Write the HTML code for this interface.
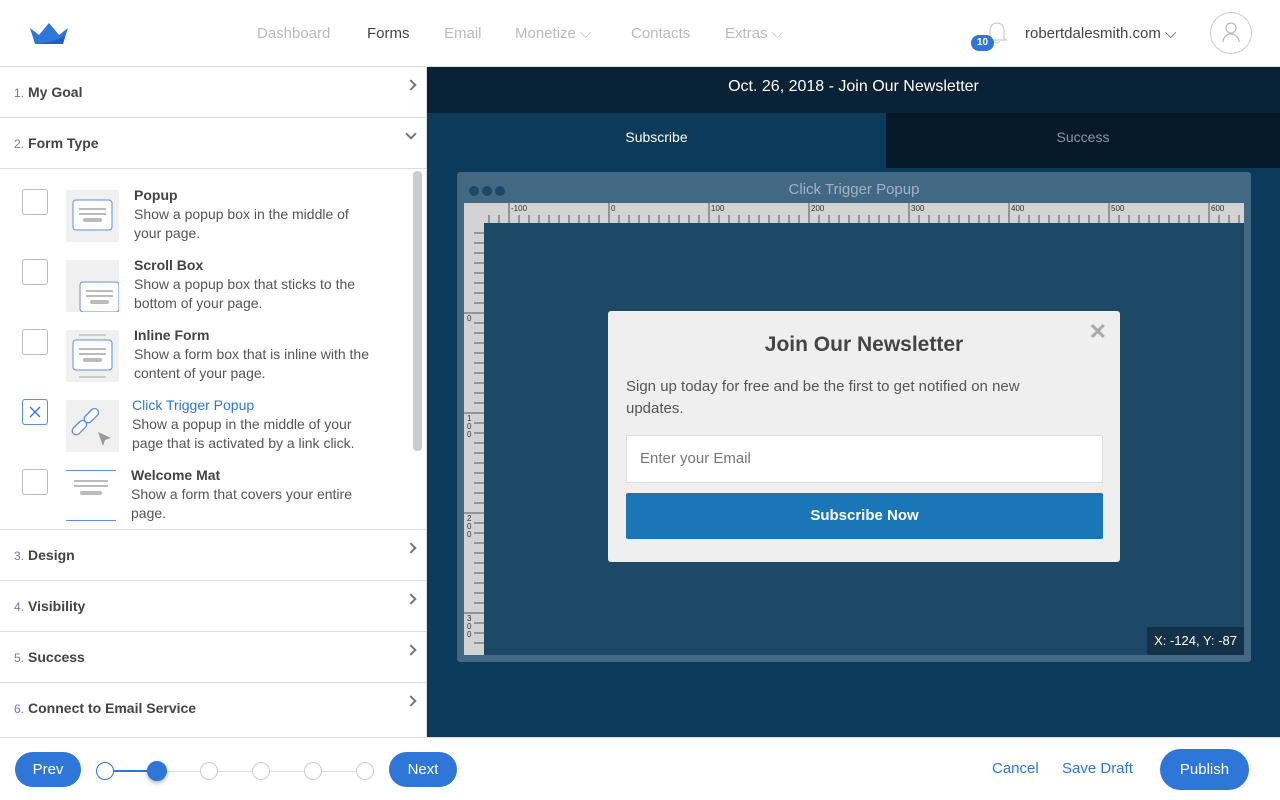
<!DOCTYPE html>
<html><head><meta charset="utf-8"><style>
*{box-sizing:border-box;margin:0;padding:0}
body{width:1280px;height:800px;overflow:hidden;font-family:"Liberation Sans",sans-serif;background:#fff;position:relative;color:#444}
.hdr{position:absolute;left:0;top:0;width:1280px;height:67px;border-bottom:1px solid #ddd;background:#fff}
.nav{position:absolute;top:25px;font-size:15px;color:#bbb}
.side{position:absolute;left:0;top:67px;width:427px;height:670px;background:#fff;border-right:1px solid #ddd}
.sec{position:absolute;left:0;width:427px;height:51px;border-bottom:1px solid #ddd;font-size:14px;font-weight:bold;color:#444}
.sec span.n{color:#7b6fc4;font-size:12px;font-weight:normal;margin-right:4px}
.sec .t{position:absolute;left:14px;top:17px}
.chev{position:absolute;right:12px;top:14px;width:8px;height:8px;border-right:2.5px solid #777;border-top:2.5px solid #777;transform:rotate(45deg)}
.item{position:absolute;left:0;width:410px;height:70px}
.cb{position:absolute;left:22px;top:20px;width:26px;height:26px;border:1px solid #bbb;border-radius:3px}
.ic{position:absolute;left:66px;top:21px;width:53px;height:52px;background:#f0f0f0;border-radius:2px}
.it{position:absolute;left:134px;top:18px;font-size:14px;font-weight:bold;color:#444}
.id{position:absolute;left:134px;top:36px;font-size:14px;color:#555;line-height:19px;width:238px}
.right{position:absolute;left:427px;top:67px;width:853px;height:670px;background:#0c3a5a}
.foot{position:absolute;left:0;top:737px;width:1280px;height:63px;background:#fff;border-top:1px solid #ddd}
.btn{position:absolute;background:#2f76d9;color:#fff;font-size:15px;text-align:center;border-radius:18px}
.dot{position:absolute;top:24px;width:18px;height:18px;border-radius:50%;border:1px solid #ccc;background:#fff}
</style></head><body>
<div class="hdr">
<svg style="position:absolute;left:30px;top:23px" width="38" height="22" viewBox="0 0 38 22"><path d="M0 5 L9 12 L19 0 L29 12 L38 5 L33 21 L5 21 Z" fill="#2f76d9"/><path d="M5 21 Q22 20 35 13 L33 21Z" fill="#1f5fbf"/></svg>
<div class="nav" style="left:257px">Dashboard</div>
<div class="nav" style="left:367px;color:#444">Forms</div>
<div class="nav" style="left:444px">Email</div>
<div class="nav" style="left:515px">Monetize ⌵</div>
<div class="nav" style="left:631px">Contacts</div>
<div class="nav" style="left:725px">Extras ⌵</div>
<svg style="position:absolute;left:986px;top:19px" width="22" height="26" viewBox="0 0 22 26"><path d="M4 19 V11 A7 7 0 0 1 18 11 V19 L20 21 H2 Z M9 22 A2 2 0 0 0 13 22" fill="none" stroke="#ccc" stroke-width="1.2"/></svg>
<div style="position:absolute;left:971px;top:35px;width:23px;height:16px;border-radius:8px;background:#2f76d9;color:#fff;font-size:10px;font-weight:bold;text-align:center;line-height:16px">10</div>
<div class="nav" style="left:1025px;color:#444">robertdalesmith.com ⌵</div>
<div style="position:absolute;left:1210px;top:12px;width:42px;height:42px;border:1px solid #ccc;border-radius:50%"><svg width="40" height="40" viewBox="0 0 40 40"><circle cx="20" cy="15" r="5" fill="none" stroke="#bbb" stroke-width="1.3"/><path d="M12 29 A8 8 0 0 1 28 29" fill="none" stroke="#bbb" stroke-width="1.3"/></svg></div>
</div>

<div class="side">
<div class="sec" style="top:0"><div class="t"><span class="n">1.</span>My Goal</div><div class="chev"></div></div>
<div class="sec" style="top:51px"><div class="t"><span class="n">2.</span>Form Type</div><div class="chev" style="transform:rotate(135deg);top:12px"></div></div>
<div style="position:absolute;left:0;top:102px;width:427px;height:361px;border-bottom:1px solid #ddd">
<div style="position:absolute;left:413px;top:2px;width:9px;height:280px;background:#ccc;border-radius:4px"></div>
<div class="item" style="top:0"><div class="cb"></div><div class="ic"><svg width="53" height="52"><rect x="7" y="10" width="39" height="30" rx="3" fill="#fff" stroke="#5b8ee6"/><rect x="13" y="18" width="27" height="2" fill="#bbb"/><rect x="13" y="23" width="27" height="2" fill="#bbb"/><rect x="17" y="28" width="19" height="4" rx="2" fill="#bbb"/></svg></div><div class="it">Popup</div><div class="id">Show a popup box in the middle of your page.</div></div>
<div class="item" style="top:70px"><div class="cb"></div><div class="ic"><svg width="53" height="52"><rect x="14" y="22" width="39" height="30" rx="3" fill="#fff" stroke="#5b8ee6"/><rect x="20" y="30" width="27" height="2" fill="#bbb"/><rect x="20" y="35" width="27" height="2" fill="#bbb"/><rect x="24" y="40" width="19" height="4" rx="2" fill="#bbb"/></svg></div><div class="it">Scroll Box</div><div class="id">Show a popup box that sticks to the bottom of your page.</div></div>
<div class="item" style="top:140px"><div class="cb"></div><div class="ic"><svg width="53" height="52"><rect x="13" y="4" width="27" height="2" fill="#ccc"/><rect x="7" y="10" width="39" height="30" rx="3" fill="#fff" stroke="#5b8ee6"/><rect x="13" y="18" width="27" height="2" fill="#bbb"/><rect x="13" y="23" width="27" height="2" fill="#bbb"/><rect x="17" y="28" width="19" height="4" rx="2" fill="#bbb"/><rect x="13" y="46" width="27" height="2" fill="#ccc"/></svg></div><div class="it">Inline Form</div><div class="id" style="width:250px">Show a form box that is inline with the content of your page.</div></div>
<div class="item" style="top:210px"><div class="cb" style="border-color:#5b8ee6"><svg width="24" height="24"><path d="M7 7 L17 17 M17 7 L7 17" stroke="#2f76d9" stroke-width="1.3"/></svg></div><div class="ic"><svg width="53" height="52"><g fill="none" stroke="#fff" stroke-width="6" stroke-linecap="round"><path d="M10 32 L19 23 M22 20 L31 11"/></g><g fill="none" stroke="#5b8ee6" stroke-width="1.3"><rect x="5" y="24" width="17" height="8" rx="4" transform="rotate(-45 13 28)"/><rect x="17" y="12" width="17" height="8" rx="4" transform="rotate(-45 25 16)"/></g><path d="M32 32 L45 38 L39 40 L37 46Z" fill="#999"/></svg></div><div class="it" style="left:132px;color:#2f76d9;font-weight:normal">Click Trigger Popup</div><div class="id" style="left:132px;width:240px">Show a popup in the middle of your page that is activated by a link click.</div></div>
<div class="item" style="top:280px"><div class="cb"></div><div class="ic" style="background:#fff"><svg width="53" height="52"><rect x="0" y="0" width="50" height="1" fill="#5b8ee6"/><rect x="8" y="10" width="34" height="2" fill="#bbb"/><rect x="8" y="15" width="34" height="2" fill="#bbb"/><rect x="14" y="21" width="22" height="4" rx="2" fill="#bbb"/><rect x="0" y="50" width="50" height="1" fill="#5b8ee6"/></svg></div><div class="it" style="left:131px">Welcome Mat</div><div class="id" style="left:131px;width:225px">Show a form that covers your entire page.</div></div>
</div>
<div class="sec" style="top:463px"><div class="t"><span class="n">3.</span>Design</div><div class="chev"></div></div>
<div class="sec" style="top:514px"><div class="t"><span class="n">4.</span>Visibility</div><div class="chev"></div></div>
<div class="sec" style="top:565px"><div class="t"><span class="n">5.</span>Success</div><div class="chev"></div></div>
<div class="sec" style="top:616px;border-bottom:none"><div class="t"><span class="n">6.</span>Connect to Email Service</div><div class="chev"></div></div>
</div>

<div class="right">
<div style="position:absolute;left:0;top:0;width:853px;height:46px;background:#0a2236;color:#fff;text-align:center;font-size:16px;line-height:40px">Oct. 26, 2018 - Join Our Newsletter</div>
<div style="position:absolute;left:0;top:46px;width:459px;height:55px;background:#0c3a5a;color:#fff;text-align:center;font-size:14px;line-height:48px">Subscribe</div>
<div style="position:absolute;left:459px;top:46px;width:394px;height:55px;background:#06192b;color:#8a97a3;text-align:center;font-size:14px;line-height:48px">Success</div>
</div>
<div style="position:absolute;left:457px;top:172px;width:794px;height:490px;background:#436883;border-radius:3px">
<div style="position:absolute;left:12px;top:11px"><span style="display:inline-block;width:10px;height:10px;border-radius:50%;background:#1d4866;margin-right:3px"></span><span style="display:inline-block;width:10px;height:10px;border-radius:50%;background:#1d4866;margin-right:3px"></span><span style="display:inline-block;width:10px;height:10px;border-radius:50%;background:#1d4866"></span></div>
<div style="position:absolute;left:0;width:794px;top:9px;text-align:center;color:#9fb3c3;font-size:15px">Click Trigger Popup</div>
</div>
<svg style="position:absolute;left:464px;top:203px" width="780" height="452" viewBox="0 0 780 452">
<rect width="780" height="20" fill="#d3d3d3"/><rect y="0" width="20" height="452" fill="#d3d3d3"/>
<rect x="20" y="20" width="760" height="432" fill="#1d4866"/>
<g stroke="#555" stroke-width="1">
<path d="M25 12V20M35 12V20M55 12V20M65 12V20M75 12V20M85 12V20M95 12V20M105 12V20M115 12V20M125 12V20M135 12V20M155 12V20M165 12V20M175 12V20M185 12V20M195 12V20M205 12V20M215 12V20M225 12V20M235 12V20M255 12V20M265 12V20M275 12V20M285 12V20M295 12V20M305 12V20M315 12V20M325 12V20M335 12V20M355 12V20M365 12V20M375 12V20M385 12V20M395 12V20M405 12V20M415 12V20M425 12V20M435 12V20M455 12V20M465 12V20M475 12V20M485 12V20M495 12V20M505 12V20M515 12V20M525 12V20M535 12V20M555 12V20M565 12V20M575 12V20M585 12V20M595 12V20M605 12V20M615 12V20M625 12V20M635 12V20M655 12V20M665 12V20M675 12V20M685 12V20M695 12V20M705 12V20M715 12V20M725 12V20M735 12V20M755 12V20M765 12V20M775 12V20"/>
<path d="M45 0V20M145 0V20M245 0V20M345 0V20M445 0V20M545 0V20M645 0V20M745 0V20"/>
<path d="M10 30H20M10 40H20M10 50H20M10 60H20M10 70H20M10 80H20M10 90H20M10 100H20M10 120H20M10 130H20M10 140H20M10 150H20M10 160H20M10 170H20M10 180H20M10 190H20M10 200H20M10 220H20M10 230H20M10 240H20M10 250H20M10 260H20M10 270H20M10 280H20M10 290H20M10 300H20M10 320H20M10 330H20M10 340H20M10 350H20M10 360H20M10 370H20M10 380H20M10 390H20M10 400H20M10 420H20M10 430H20M10 440H20"/>
<path d="M0 110H20M0 210H20M0 310H20M0 410H20"/>
</g>
<g font-size="8" fill="#333" font-family="Liberation Sans">
<text x="47" y="8">-100</text><text x="147" y="8">0</text><text x="247" y="8">100</text><text x="347" y="8">200</text><text x="447" y="8">300</text><text x="547" y="8">400</text><text x="647" y="8">500</text><text x="747" y="8">600</text>
<text x="3" y="118">0</text>
<text x="3" y="218">1</text><text x="3" y="226">0</text><text x="3" y="234">0</text>
<text x="3" y="318">2</text><text x="3" y="326">0</text><text x="3" y="334">0</text>
<text x="3" y="418">3</text><text x="3" y="426">0</text><text x="3" y="434">0</text>
</g></svg>
<div style="position:absolute;left:1147px;top:627px;width:97px;height:28px;background:#13324a;color:#fff;font-size:13px;line-height:28px;text-align:center">X: -124, Y: -87</div>

<div style="position:absolute;left:608px;top:311px;width:512px;height:251px;background:#efefef;border-radius:3px">
<div style="position:absolute;right:13px;top:8px;font-size:22px;color:#aaa;font-weight:bold">✕</div>
<div style="position:absolute;left:0;width:512px;top:22px;text-align:center;font-size:21px;font-weight:bold;color:#444">Join Our Newsletter</div>
<div style="position:absolute;left:18px;top:65px;width:420px;font-size:15px;line-height:22px;color:#555">Sign up today for free and be the first to get notified on new updates.</div>
<div style="position:absolute;left:18px;top:124px;width:477px;height:48px;background:#fff;border:1px solid #ddd;font-size:15px;color:#777;padding:14px 13px">Enter your Email</div>
<div style="position:absolute;left:18px;top:182px;width:477px;height:46px;background:#1b76b8;border-radius:2px;color:#fff;font-size:15px;font-weight:bold;text-align:center;line-height:46px">Subscribe Now</div>
</div>

<div class="foot">
<div class="btn" style="left:15px;top:14px;width:66px;height:35px;line-height:35px">Prev</div>
<div style="position:absolute;left:105px;top:33px;width:260px;height:1px;background:#ddd"></div>
<div style="position:absolute;left:105px;top:32px;width:50px;height:2px;background:#2f76d9"></div>
<div class="dot" style="left:96px;border-color:#2f76d9"></div>
<div class="dot" style="left:147px;background:#2f76d9;border-color:#2f76d9;width:20px;height:20px;top:23px;box-shadow:0 2px 4px rgba(0,0,0,.3)"></div>
<div class="dot" style="left:200px"></div><div class="dot" style="left:252px"></div><div class="dot" style="left:304px"></div><div class="dot" style="left:356px"></div>
<div class="btn" style="left:389px;top:14px;width:68px;height:35px;line-height:35px">Next</div>
<div style="position:absolute;left:992px;top:22px;font-size:15px;color:#2f76d9">Cancel</div>
<div style="position:absolute;left:1062px;top:22px;font-size:15px;color:#2f76d9">Save Draft</div>
<div class="btn" style="left:1160px;top:11px;width:89px;height:41px;line-height:41px;border-radius:21px">Publish</div>
</div>
</body></html>
